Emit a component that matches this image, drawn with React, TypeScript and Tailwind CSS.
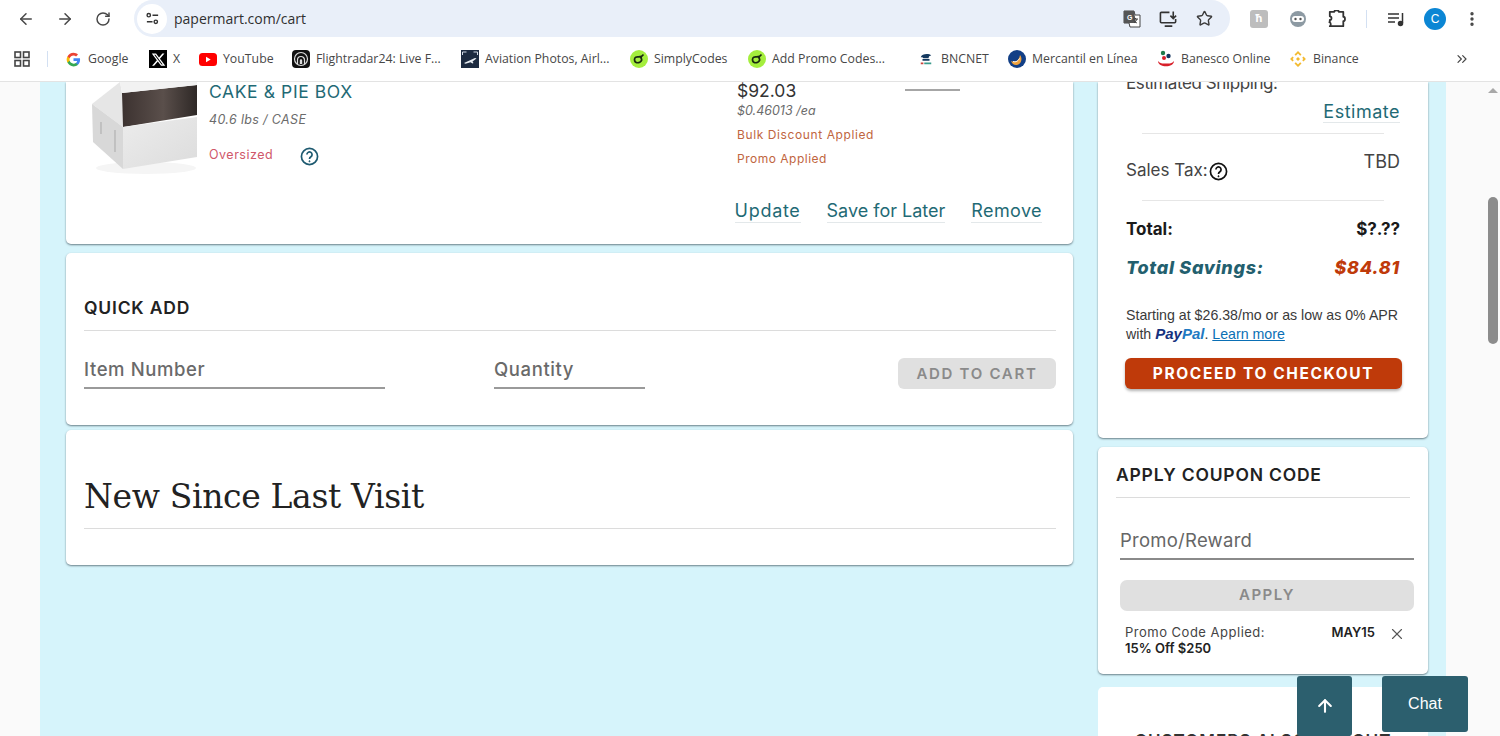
import { ArrowLeft, ArrowRight, ArrowUp, ChevronsRight, EllipsisVertical, RotateCw, Star, X as XIcon } from "lucide-react";
import type { ReactNode } from "react";

const sans = "font-['Inter','Liberation_Sans',sans-serif]";

// Favicons for the bookmarks bar
const GoogleIcon = () => (
  <svg viewBox="0 0 24 24" className="h-[15px] w-[15px]">
    <path fill="#4285F4" d="M22.5 12.2c0-.8-.1-1.500-.2-2.200H12v4.200h5.900c-.3 1.400-1 2.500-2.200 3.300v2.700h3.500c2.100-1.900 3.300-4.700 3.300-8z" />
    <path fill="#34A853" d="M12 23c2.900 0 5.400-1 7.200-2.700l-3.500-2.700c-1 .7-2.200 1-3.700 1-2.800 0-5.200-1.900-6.100-4.500H2.300v2.800C4.100 20.500 7.800 23 12 23z" />
    <path fill="#FBBC05" d="M5.900 14.100c-.2-.7-.3-1.400-.3-2.100s.1-1.400.3-2.100V7.100H2.300C1.500 8.600 1 10.200 1 12s.5 3.400 1.300 4.900l3.600-2.800z" />
    <path fill="#EA4335" d="M12 5.400c1.600 0 3 .6 4.100 1.600l3.100-3.100C17.400 2.100 14.900 1 12 1 7.800 1 4.100 3.500 2.300 7.100l3.600 2.800C6.800 7.300 9.200 5.400 12 5.400z" />
  </svg>
);

const XLogo = () => (
  <div className="flex h-[18px] w-[18px] items-center justify-center bg-black">
    <svg viewBox="0 0 24 24" className="h-[15px] w-[15px]" fill="#fff">
      <path d="M18.200 2.500h3.300l-7.200 8.200 8.500 11.200h-6.700l-5.200-6.800-6 6.800H1.700l7.700-8.800L1.300 2.500h6.800l4.700 6.200zm-1.200 17.500h1.800L7.100 4.400H5.100z" />
    </svg>
  </div>
);

const YouTubeIcon = () => (
  <svg viewBox="0 0 18 13" className="h-[13px] w-[18px]">
    <rect width="18" height="13" rx="3.500" fill="#f00" />
    <path d="M7 3.800v5.400l4.700-2.700z" fill="#fff" />
  </svg>
);

const RadarIcon = () => (
  <svg viewBox="0 0 18 18" className="h-[18px] w-[18px]">
    <rect width="18" height="18" rx="4" fill="#111" />
    <circle cx="9" cy="9" r="6.500" fill="none" stroke="#ddd" strokeWidth="1.200" />
    <path d="M5.500 14V10a3.500 3.500 0 0 1 7 0v4" fill="none" stroke="#ddd" strokeWidth="1.200" />
    <path d="M7.800 14v-3.500a1.200 1.200 0 0 1 2.400 0V14" fill="#ddd" />
  </svg>
);

const PlaneIcon = () => (
  <svg viewBox="0 0 18 18" className="h-[18px] w-[18px]">
    <rect width="18" height="18" fill="#1c2b40" />
    <path d="M3 13l11-5 1.500.500-4 3 1 1.500-1 .500-2-1.200-5 1.500z" fill="#e8edf2" />
    <path d="M1.500 5V2h4M16.500 5V2h-4" fill="none" stroke="#cfd8e3" strokeWidth="1" />
  </svg>
);

const SimplyIcon = () => (
  <svg viewBox="0 0 18 18" className="h-[18px] w-[18px]">
    <circle cx="9" cy="9" r="9" fill="#a4ee3d" />
    <path d="M4.500 9.500c0-2 2-3 4-2.600l2.400-.4.800 3.500c-.5 2-3 3-5 2.700-1.500-.4-2.200-1.900-2.200-3.200z" fill="none" stroke="#1a2b10" strokeWidth="1.700" />
    <path d="M10 8l3.500-3.500" stroke="#1a2b10" strokeWidth="1.700" />
  </svg>
);

const BncIcon = () => (
  <svg viewBox="0 0 16 16" className="h-[14px] w-[14px]">
    <path d="M2 6c1-4 9-5 12-2-2 0-3 1-3 3H5C4 6 3 6 2 6z" fill="#14395f" />
    <rect x="4" y="8" width="8" height="2" fill="#14395f" />
    <rect x="2" y="12" width="3" height="2" fill="#c9433d" />
    <rect x="6" y="12" width="8" height="2" fill="#3a9b8c" />
  </svg>
);

const MercantilIcon = () => (
  <svg viewBox="0 0 18 18" className="h-[18px] w-[18px]">
    <circle cx="9" cy="9" r="9" fill="#123f86" />
    <path d="M3 11c4 2 8 0 9-6 3 4 1 9-3 10-3 .5-5-1.500-6-4z" fill="#f0a23c" />
    <path d="M5 11.500c3 1 5-.500 6.500-3" stroke="#fff" strokeWidth="1" fill="none" />
  </svg>
);

const BanescoIcon = () => (
  <svg viewBox="0 0 18 18" className="h-[18px] w-[18px]">
    <circle cx="6" cy="3" r="2.200" fill="#1f7a4a" />
    <circle cx="11.500" cy="6" r="2.200" fill="#13355f" />
    <circle cx="7" cy="8" r="2" fill="#d8202a" />
    <path d="M1 11c0 7 16 7 16 0-2 3-5 2.500-8 2.500S3 14 1 11z" fill="#d8202a" />
  </svg>
);

const BinanceIcon = () => (
  <svg viewBox="0 0 18 18" className="h-[18px] w-[18px]" fill="#f3ba2f">
    <path d="M9 1l3.500 3.500-1.300 1.300L9 3.600 6.800 5.800 5.500 4.500zM3.500 6.500L4.800 7.800 3.600 9l1.200 1.200-1.300 1.300L1.100 9zM14.500 6.500L16.900 9l-2.400 2.500-1.300-1.300L14.400 9l-1.200-1.200zM9 7l2 2-2 2-2-2zM5.500 13.500l1.300-1.300L9 14.400l2.200-2.200 1.300 1.300L9 17z" />
  </svg>
);

const bookmarks: { icon: ReactNode; label: string; width: string }[] = [
  { icon: <GoogleIcon />, label: "Google", width: "w-[44px]" },
  { icon: <XLogo />, label: "X", width: "w-[9px]" },
  { icon: <YouTubeIcon />, label: "YouTube", width: "w-[52px]" },
  { icon: <RadarIcon />, label: "Flightradar24: Live F...", width: "w-[128px]" },
  { icon: <PlaneIcon />, label: "Aviation Photos, Airl...", width: "w-[128px]" },
  { icon: <SimplyIcon />, label: "SimplyCodes", width: "w-[77px]" },
  { icon: <SimplyIcon />, label: "Add Promo Codes...", width: "w-[116px]" },
  { icon: <BncIcon />, label: "BNCNET", width: "w-[50px]" },
  { icon: <MercantilIcon />, label: "Mercantil en Línea", width: "w-[108px]" },
  { icon: <BanescoIcon />, label: "Banesco Online", width: "w-[91px]" },
  { icon: <BinanceIcon />, label: "Binance", width: "w-[45px]" },
];

const BrowserChrome = () => (
  <div className="relative z-10 h-[82px] shrink-0 border-b border-[#e3e3e3] bg-white">
    <div className="flex h-[37px] items-center">
      <div className="flex w-[134px] items-center pl-[17px] text-[#474747]">
        <ArrowLeft className="h-[18px] w-[18px]" strokeWidth={2} />
        <ArrowRight className="ml-[21px] h-[18px] w-[18px]" strokeWidth={2} />
        <RotateCw className="ml-[21px] h-[16px] w-[16px]" strokeWidth={2.200} />
      </div>
      <div className="flex h-[37px] w-[1096px] items-center rounded-r-[19px] rounded-l-[19px] bg-[#e9eff9] pl-[3px] pr-[17px]">
        <div className="flex h-[30px] w-[30px] items-center justify-center rounded-full bg-white">
          <svg viewBox="0 0 16 16" className="h-[15px] w-[15px]" fill="none" stroke="#333" strokeWidth="1.500">
            <circle cx="4" cy="4.500" r="1.800" />
            <path d="M8 4.500h6M2 11.500h6" />
            <circle cx="11.500" cy="11.500" r="1.800" />
          </svg>
        </div>
        <span className="ml-[7px] font-['Open_Sans',sans-serif] text-[14px] text-[#303030]">papermart.com/cart</span>
        <div className="ml-auto flex items-center gap-[18px] text-[#3c3c3c]">
          <svg viewBox="0 0 18 18" className="h-[18px] w-[18px]">
            <path d="M1 1h10l1 4h5v12H7l-1-4H1z" fill="#fff" stroke="#444" />
            <path d="M1 1h10l2 12H1z" fill="#555" />
            <text x="4" y="10" fontSize="7" fill="#fff" fontWeight="700" fontFamily="Liberation Sans">G</text>
            <path d="M10 9h5M12.500 8v1M14 9c-.5 2-2 3-3 4M11 10.500c.5 1 2 2 3 2.500" stroke="#444" fill="none" />
          </svg>
          <svg viewBox="0 0 20 18" className="h-[18px] w-[19px]" fill="none" stroke="#333" strokeWidth="1.700">
            <path d="M11 2H2.500A1 1 0 0 0 1.500 3v9a1 1 0 0 0 1 1h14a1 1 0 0 0 1-1V9M6 16.500h8M15 1v7M12 5.500L15 8.500l3-3" />
          </svg>
          <Star className="h-[17px] w-[17px]" strokeWidth={2} />
        </div>
      </div>
      <div className="flex flex-1 items-center pl-[20px] text-[#444]">
        <div className="flex h-[18px] w-[18px] items-center justify-center rounded-[3px] bg-[#bdbdbd] text-[11px] font-bold text-white">
          ћ
        </div>
        <div className="ml-[22px] flex h-[16px] w-[16px] items-center justify-center rounded-full bg-[#8d9aa3]">
          <svg viewBox="0 0 12 6" className="h-[6px] w-[12px]">
            <rect width="12" height="6" rx="3" fill="#fff" />
            <circle cx="3.500" cy="3" r="1.200" fill="#555" />
            <circle cx="8.500" cy="3" r="1.200" fill="#555" />
          </svg>
        </div>
        <svg viewBox="0 0 20 20" className="ml-[22px] h-[18px] w-[18px]" fill="none" stroke="#333" strokeWidth="2" strokeLinejoin="round">
          <path d="M2 2h5c0-2.200 5-2.200 5 0h5v5.500c2.500 0 2.500 5 0 5V18H2c1.500-1 1.500-4-.5-4.500H2V11c2.500.5 2.500-4 0-4z" />
        </svg>
        <div className="ml-[20px] h-[18px] w-px bg-[#d3e0f2]" />
        <svg viewBox="0 0 18 16" className="ml-[20px] h-[16px] w-[18px]" fill="none" stroke="#333" strokeWidth="1.500">
          <path d="M1 3h11M1 7h11M1 11h7M15.500 2v10" />
          <circle cx="13.500" cy="12.500" r="2" fill="#333" />
        </svg>
        <div className="ml-[19px] flex h-[22px] w-[22px] items-center justify-center rounded-full bg-[#0b86d4] font-['Liberation_Sans',sans-serif] text-[12px] text-white">
          C
        </div>
        <EllipsisVertical className="ml-[17px] h-[18px] w-[18px]" strokeWidth={2.500} />
      </div>
    </div>
    <div className="flex h-[44px] items-center pl-[14px] font-['Open_Sans',sans-serif] text-[12.300px] text-[#474747]">
      <svg viewBox="0 0 16 16" className="h-[16px] w-[16px]" fill="none" stroke="#444" strokeWidth="1.600">
        <rect x="1" y="1" width="5.500" height="5.500" />
        <rect x="9.500" y="1" width="5.500" height="5.500" />
        <rect x="1" y="9.500" width="5.500" height="5.500" />
        <rect x="9.500" y="9.500" width="5.500" height="5.500" />
      </svg>
      <div className="ml-[17px] mr-[16px] h-[16px] w-px bg-[#d3e0f2]" />
      <div className="flex items-center gap-[17px]">
        {bookmarks.map((b, i) => (
          <div key={b.label + i} className={`flex items-center ${b.label === "BNCNET" ? "ml-[12px]" : ""}`}>
            <div className="flex w-[18px] justify-center">{b.icon}</div>
            <span className={`ml-[6px] whitespace-nowrap ${b.width}`}>{b.label}</span>
          </div>
        ))}
      </div>
      <ChevronsRight className="ml-auto mr-[30px] h-[16px] w-[16px]" strokeWidth={1.800} />
    </div>
  </div>
);

const cardCls = "rounded-b-[5px] bg-white shadow-[0_1px_2px_rgba(60,80,90,0.7)]";

const HelpIcon = ({ className, color }: { className: string; color: string }) => (
  <svg viewBox="0 0 20 20" className={className} fill="none" stroke={color}>
    <circle cx="10" cy="10" r="8.500" strokeWidth="1.800" />
    <path d="M7.300 8a2.700 2.700 0 1 1 4.200 2.200c-1 .7-1.500 1.200-1.500 2.300" strokeWidth="1.800" />
    <circle cx="10" cy="15" r="0.600" fill={color} strokeWidth="1" />
  </svg>
);

const BoxImage = () => (
  <svg viewBox="0 0 116 100" className="h-[100px] w-[116px] shrink-0">
    <defs>
      <linearGradient id="inner" x1="0" x2="1" y1="0" y2="0">
        <stop offset="0" stopColor="#3c3230" />
        <stop offset="0.550" stopColor="#5a4f4b" />
        <stop offset="1" stopColor="#2e2826" />
      </linearGradient>
      <linearGradient id="front" x1="0" x2="1" y1="0" y2="1">
        <stop offset="0" stopColor="#ececec" />
        <stop offset="1" stopColor="#dcdcdc" />
      </linearGradient>
    </defs>
    <ellipse cx="58" cy="86" rx="50" ry="6" fill="#f5f5f5" />
    <path d="M32 0L4 22l31 23-1-34z" fill="#e6e6e6" />
    <path d="M4 22l1 38 30 27V45z" fill="#d8d8d8" />
    <path d="M34 11l75-8v30L35 45z" fill="url(#inner)" />
    <path d="M35 45l74-10v40L35 87z" fill="url(#front)" />
    <path d="M32 0l2 11 75-8V0z" fill="#f2f2f2" />
    <path d="M13 40v12M27 48v22" stroke="#a9a9a9" fill="none" />
  </svg>
);

const Link = ({ children, className = "" }: { children: ReactNode; className?: string }) => (
  <span className={`border-b border-[#e3e8ea] text-[#1f6a75] ${className}`}>{children}</span>
);

const CartItem = () => (
  <div className={`${cardCls} h-[162px]`}>
    <div className="flex h-[118px]">
      <div className="ml-[22px]">
        <BoxImage />
      </div>
      <div className="ml-[5px] flex w-[528px] flex-col">
        <div className="text-[17.500px] leading-[20px] tracking-[0.600px] text-[#1f6a75]">CAKE &amp; PIE BOX</div>
        <div className="mt-[9px] text-[12.500px] italic leading-[18px] tracking-[0.350px] text-[#6b6b6b]">40.6 lbs / CASE</div>
        <div className="mt-[16px] flex items-center text-[12.500px] tracking-[0.500px] text-[#d0586a]">
          <span className="w-[91px]">Oversized</span>
          <HelpIcon className="mt-[2px] h-[19px] w-[19px]" color="#1e5a70" />
        </div>
      </div>
      <div className="flex w-[168px] flex-col">
        <div className="text-[17.500px] leading-[18px] text-[#333]">$92.03</div>
        <div className="mt-[2px] text-[12.500px] italic leading-[18px] text-[#6b6b6b]">$0.46013 /ea</div>
        <div className="mt-[6px] text-[12px] leading-[18px] tracking-[0.600px] text-[#bf6540]">Bulk Discount Applied</div>
        <div className="mt-[6px] text-[12px] leading-[18px] tracking-[0.500px] text-[#bf6540]">Promo Applied</div>
      </div>
      <div className="mt-[7px] h-[2px] w-[55px] bg-[#a6a6a6]" />
    </div>
    <div className="flex justify-end gap-[26px] pr-[31px] text-[18px] leading-[22px]">
      <Link className="tracking-[0.700px]">Update</Link>
      <Link>Save for Later</Link>
      <Link className="tracking-[0.400px]">Remove</Link>
    </div>
  </div>
);

const QuickAdd = () => (
  <div className={`${cardCls} mt-[9px] h-[172px] rounded-t-[5px] pl-[18px] pr-[17px] pt-[44px]`}>
    <div className="border-b border-[#dcdcdc] pb-[11px] text-[17.500px] font-semibold leading-[22px] tracking-[0.800px] text-[#222]">QUICK ADD</div>
    <div className="mt-[27px] flex items-start">
      <div className="h-[31px] w-[301px] border-b-2 border-[#9a9a9a] text-[18.500px] font-medium leading-[22px] tracking-[0.600px] text-[#6a6a6a]">Item Number</div>
      <div className="ml-[109px] h-[31px] w-[151px] border-b-2 border-[#9a9a9a] text-[18.500px] font-medium leading-[22px] tracking-[0.600px] text-[#6a6a6a]">Quantity</div>
      <div className="ml-auto flex h-[31px] w-[158px] items-center justify-center rounded-[6px] bg-[#e0e0e0] pt-px text-[15px] font-semibold tracking-[1.700px] text-[#8a8a8a]">
        ADD TO CART
      </div>
    </div>
  </div>
);

const NewSince = () => (
  <div className={`${cardCls} mt-[5px] h-[135px] rounded-t-[5px] pl-[18px] pr-[17px] pt-[43px]`}>
    <div className="border-b border-[#dcdcdc] pb-[7px] font-['DejaVu_Serif',serif] text-[33px] leading-[48px] tracking-[-0.350px] text-[#222]">
      New Since Last Visit
    </div>
  </div>
);

const Summary = () => (
  <div className={`${cardCls} flex h-[356px] flex-col px-[28px]`}>
    <div className="-mt-[9px] flex items-start justify-between text-[17px] leading-[20px] tracking-[-0.400px] text-[#444]">
      <span>Estimated Shipping:</span>
      <span className="mr-[9px] mt-[4px] h-[2px] w-[18px] bg-[#333]" />
    </div>
    <div className="mt-[8px] text-right text-[18px] leading-[22px] tracking-[0.500px]">
      <Link>Estimate</Link>
    </div>
    <div className="mx-[16px] mt-[10px] border-t border-[#e6e6e6]" />
    <div className="mt-[18px] flex items-start justify-between text-[17px] leading-[20px] text-[#444]">
      <span className="mt-[6px] flex items-center">
        Sales Tax:
        <HelpIcon className="ml-px mt-[4px] h-[19px] w-[19px]" color="#111" />
      </span>
      <span className="text-[18px]">TBD</span>
    </div>
    <div className="mx-[16px] mt-[19px] border-t border-[#e6e6e6]" />
    <div className="mt-[18px] flex justify-between text-[17px] font-bold leading-[20px] text-[#1a1a1a]">
      <span>Total:</span>
      <span>$?.??</span>
    </div>
    <div className="mt-[18px] flex justify-between text-[18px] font-extrabold italic leading-[22px] tracking-[0.700px]">
      <span className="text-[#235f6e]">Total Savings:</span>
      <span className="text-[#bf3a0a]">$84.81</span>
    </div>
    <div className="mt-[27px] font-['Liberation_Sans',sans-serif] text-[14.200px] leading-[19px] text-[#3a3a3a]">
      <div className="whitespace-nowrap">Starting at $26.38/mo or as low as 0% APR</div>
      <div className="whitespace-nowrap">
        with{" "}
        <span className="text-[15px] font-extrabold italic leading-none">
          <span className="text-[#15327f]">Pay</span>
          <span className="text-[#1f7ac2]">Pal</span>
        </span>
        . <span className="text-[#0a6fb5] underline">Learn more</span>
      </div>
    </div>
    <div className="mt-[14px] flex h-[31px] w-[277px] shrink-0 -translate-x-px items-center justify-center rounded-[6px] bg-[#bf3a0a] text-[15.500px] font-bold tracking-[1.600px] text-white shadow-[0_2px_3px_rgba(0,0,0,0.3)]">
      PROCEED TO CHECKOUT
    </div>
  </div>
);

const Coupon = () => (
  <div className={`${cardCls} mt-[9px] h-[227px] rounded-t-[5px] px-[18px]`}>
    <div className="border-b border-[#dcdcdc] pb-[11px] pt-[17px] text-[17.500px] font-semibold leading-[22px] tracking-[0.800px] text-[#222]">
      APPLY COUPON CODE
    </div>
    <div className="ml-[4px] mr-[-4px] mt-[30px] h-[32px] border-b-2 border-[#8a8a8a] text-[18.500px] leading-[24px] tracking-[0.250px] text-[#666]">
      Promo/Reward
    </div>
    <div className="ml-[4px] mr-[-4px] mt-[20px] flex h-[31px] items-center justify-center rounded-[7px] bg-[#e0e0e0] text-[15px] font-semibold tracking-[1.500px] text-[#8a8a8a]">
      APPLY
    </div>
    <div className="ml-[9px] mt-[13px] flex text-[13px] leading-[16px] text-[#444]">
      <div className="flex-1">
        <div className="tracking-[0.500px]">Promo Code Applied:</div>
        <div className="font-semibold text-[#222]">15% Off $250</div>
      </div>
      <div className="font-semibold text-[#222]">MAY15</div>
      <XIcon className="ml-[13px] mr-[4px] mt-[1px] h-[18px] w-[18px] text-[#555]" strokeWidth={1.500} />
    </div>
  </div>
);

const Scrollbar = () => (
  <div className="flex w-[14px] shrink-0 flex-col items-center bg-[#fafafa]">
    <div className="mt-[6px] h-0 w-0 border-x-[5px] border-b-[5px] border-x-transparent border-b-[#a8a8a8]" />
    <div className="mt-[104px] h-[147px] w-[10px] rounded-[5px] bg-[#8c8c8c]" />
  </div>
);

export default function App() {
  return (
    <div className={`relative flex h-[736px] w-[1500px] flex-col overflow-hidden bg-white ${sans}`}>
      <BrowserChrome />
      <div className="flex min-h-0 flex-1">
        <div className="w-[40px] shrink-0 bg-[#fafafa]" />
        <div className="flex w-[1406px] items-start overflow-hidden bg-[#d6f4fb] pl-[26px]">
          <div className="w-[1007px]">
            <CartItem />
            <QuickAdd />
            <NewSince />
          </div>
          <div className="ml-[25px] w-[330px]">
            <Summary />
            <Coupon />
            <div className="mt-[13px] h-[60px] rounded-t-[5px] bg-white pt-[42px] text-center text-[17px] font-semibold tracking-[1px] text-[#333]">
              CUSTOMERS ALSO BOUGHT
            </div>
          </div>
        </div>
        <div className="w-[40px] shrink-0 bg-[#fafafa]" />
        <Scrollbar />
      </div>
      <div className="absolute left-[1297px] top-[676px] flex h-[60px] w-[55px] items-center justify-center rounded-[3px] bg-[#2c5f6e] text-white">
        <ArrowUp className="h-[20px] w-[20px]" strokeWidth={2.500} />
      </div>
      <div className="absolute left-[1382px] top-[676px] flex h-[56px] w-[86px] items-center justify-center rounded-[3px] bg-[#2c5f6e] font-['Liberation_Sans',sans-serif] text-[16px] text-white">
        Chat
      </div>
    </div>
  );
}
